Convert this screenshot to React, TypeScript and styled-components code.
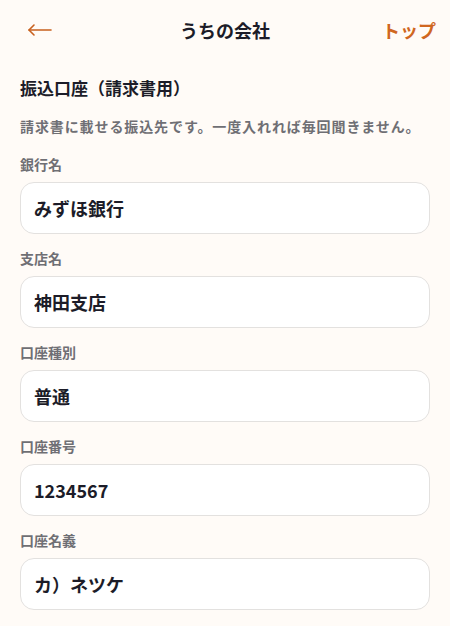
import React from 'react';
import styled, { createGlobalStyle } from 'styled-components';

const GlobalStyle = createGlobalStyle`
  html, body {
    margin: 0;
    padding: 0;
    background: #fffbf7;
  }
  body {
    font-family: "Noto Sans CJK JP", "Noto Sans", sans-serif;
    color: #1c1c28;
  }
`;

const Page = styled.div`
  width: 450px;
  min-height: 626px;
  background: #fffbf7;
  box-sizing: border-box;
`;

const Header = styled.header`
  display: grid;
  grid-template-columns: 1fr auto 1fr;
  align-items: center;
  height: 60px;
  padding: 0 14px;
  box-sizing: border-box;
`;

const BackButton = styled.button`
  justify-self: start;
  display: flex;
  align-items: center;
  border: none;
  background: none;
  padding: 0;
  margin-left: 13px;
  color: #c8601e;
  cursor: pointer;
`;

const Title = styled.h1`
  margin: 0;
  font-size: 18px;
  font-weight: 700;
  color: #1c1c28;
`;

const TopLink = styled.a`
  justify-self: end;
  font-size: 18px;
  font-weight: 700;
  color: #d0671f;
  text-decoration: none;
`;

const Content = styled.main`
  padding: 14px 20px 0;
`;

const SectionTitle = styled.h2`
  margin: 0;
  font-size: 17px;
  font-weight: 700;
  line-height: 28px;
`;

const Description = styled.p`
  margin: 14px 0 18px;
  font-size: 14px;
  font-weight: 700;
  line-height: 20px;
  color: #6f6f74;
  letter-spacing: 0.9px;
  white-space: nowrap;
`;

const FieldList = styled.div`
  display: flex;
  flex-direction: column;
  gap: 14px;
`;

const Field = styled.label`
  display: flex;
  flex-direction: column;
  gap: 8px;
`;

const LabelText = styled.span`
  font-size: 14px;
  font-weight: 700;
  line-height: 20px;
  color: #6f6f74;
`;

const Input = styled.input`
  box-sizing: border-box;
  width: 100%;
  height: 52px;
  padding: 0 13px;
  border: 1px solid #e3e1df;
  border-radius: 14px;
  background: #ffffff;
  font-family: "Noto Sans CJK JP", "Noto Sans", sans-serif;
  font-size: 18px;
  font-weight: 700;
  color: #1c1c28;
  outline: none;
`;

const BackArrow = () => (
  <svg width="26" height="14" viewBox="0 0 26 14" fill="none">
    <path d="M2 7H24" stroke="currentColor" strokeWidth="1.6" strokeLinecap="round" />
    <path d="M7 2L2 7L7 12" stroke="currentColor" strokeWidth="1.6" strokeLinecap="round" strokeLinejoin="round" />
  </svg>
);

const fields = [
  { label: '銀行名', value: 'みずほ銀行' },
  { label: '支店名', value: '神田支店' },
  { label: '口座種別', value: '普通' },
  { label: '口座番号', value: '1234567' },
  { label: '口座名義', value: 'カ）ネツケ' },
];

const App = () => {
  return (
    <Page>
      <GlobalStyle />
      <Header>
        <BackButton aria-label="戻る">
          <BackArrow />
        </BackButton>
        <Title>うちの会社</Title>
        <TopLink href="#">トップ</TopLink>
      </Header>
      <Content>
        <SectionTitle>振込口座（請求書用）</SectionTitle>
        <Description>請求書に載せる振込先です。一度入れれば毎回聞きません。</Description>
        <FieldList>
          {fields.map((f) => (
            <Field key={f.label}>
              <LabelText>{f.label}</LabelText>
              <Input defaultValue={f.value} />
            </Field>
          ))}
        </FieldList>
      </Content>
    </Page>
  );
};

export default App;
